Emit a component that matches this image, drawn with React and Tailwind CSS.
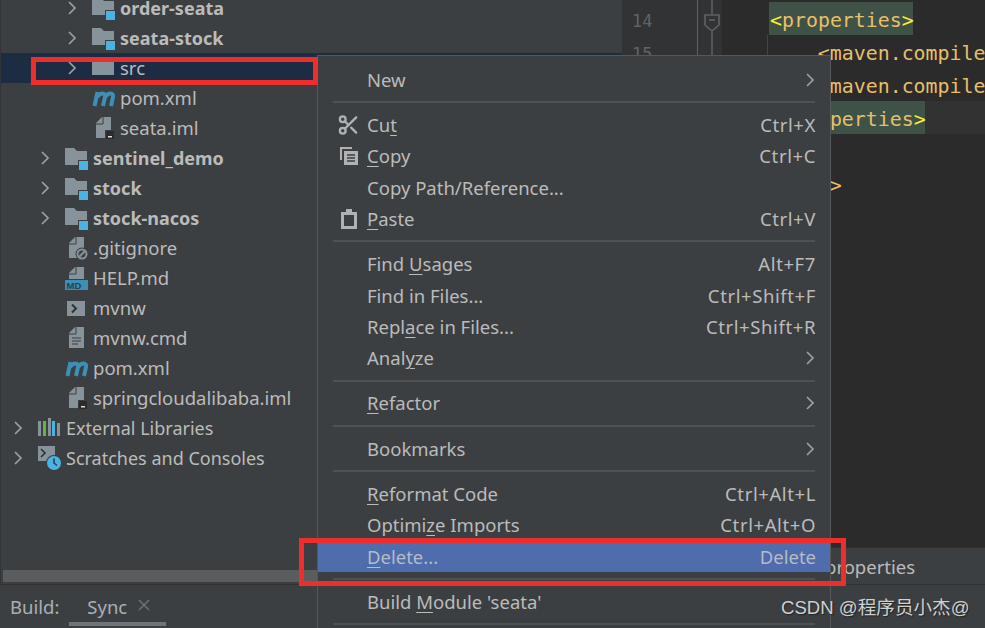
import { Scissors } from 'lucide-react';

const Chevron = ({ className = 'w-[12px] h-[16px]' }) => (
  <svg viewBox="0 0 12 16" className={className} fill="none" stroke="#9da0a2" strokeWidth="1.7">
    <path d="M3 2l6 6-6 6" />
  </svg>
);

// file tree icons
const FolderIcon = ({ badge }) => (
  <svg width="23" height="24" viewBox="0 0 23 24">
    <path d="M0 2h9l3 3h10v14H0z" fill="#87939a" />
    {badge && <rect x="13" y="14" width="10" height="10" fill="#3c3f41" />}
    {badge && <rect x="14" y="15" width="9" height="9" fill="#4cb2e2" />}
  </svg>
);

const FileBody = () => (
  <>
    <path d="M4 7l6-6h9v21H4z" fill="#87939a" />
    <path d="M4 8h7V1" fill="none" stroke="#3c3f41" strokeWidth="1" />
  </>
);

const ImlIcon = () => (
  <svg width="23" height="24" viewBox="0 0 23 24">
    <FileBody />
    <rect x="13.5" y="14.5" width="9" height="9" fill="#2b2b2b" stroke="#3c3f41" />
    <rect x="16" y="20" width="4" height="1.5" fill="#dddddd" />
  </svg>
);

const GitIgnoreIcon = () => (
  <svg width="23" height="24" viewBox="0 0 23 24">
    <FileBody />
    <circle cx="17" cy="18" r="6.5" fill="#3c3f41" />
    <circle cx="17" cy="18" r="4.5" fill="none" stroke="#87939a" strokeWidth="2" />
    <path d="M14 21l6-6" stroke="#87939a" strokeWidth="2" />
  </svg>
);

const MdIcon = () => (
  <svg width="23" height="24" viewBox="0 0 23 24">
    <path d="M4 7l6-6h9v12H4z" fill="#87939a" />
    <path d="M4 8h7V1" fill="none" stroke="#3c3f41" strokeWidth="1" />
    <rect x="0" y="14" width="23" height="10" fill="#3d8fb5" />
    <text x="1.5" y="22.5" fontSize="9.5" fontWeight="700" fill="#2b3f4c" fontFamily="Liberation Sans, sans-serif">MD</text>
  </svg>
);

const ShellIcon = () => (
  <svg width="23" height="24" viewBox="0 0 23 24">
    <rect x="2" y="5" width="18" height="15" fill="#87939a" />
    <path d="M7 8.5l4 4-4 4" fill="none" stroke="#2f3234" strokeWidth="2" />
  </svg>
);

const TextIcon = () => (
  <svg width="23" height="24" viewBox="0 0 23 24">
    <FileBody />
    <path d="M7 12h9M7 15h9M7 18h6" stroke="#3c3f41" strokeWidth="1.2" />
  </svg>
);

const MavenIcon = () => (
  <svg width="23" height="24" viewBox="0 0 23 24" fill="none" stroke="#3d8fb5" strokeWidth="4">
    <path d="M2.5 20L5.5 6" />
    <path d="M5 11Q7.5 7.5 10.5 7.5Q13.5 7.5 13 11L11 20" />
    <path d="M13 11Q15.5 7.5 18.5 7.5Q21.5 7.5 21 11L19 20" />
  </svg>
);

const LibIcon = () => (
  <svg width="23" height="24" viewBox="0 0 23 24">
    <rect x="0" y="5" width="3" height="15" fill="#87939a" />
    <rect x="5" y="5" width="3" height="15" fill="#62b543" />
    <rect x="10" y="2" width="3" height="18" fill="#87939a" />
    <rect x="14" y="5" width="3" height="15" fill="#4cb2e2" />
    <rect x="19" y="7" width="3" height="13" fill="#87939a" />
  </svg>
);

const ScratchIcon = () => (
  <svg width="23" height="24" viewBox="0 0 23 24">
    <rect x="0" y="0" width="17" height="15" fill="#87939a" />
    <path d="M3 3l4 4-4 4" fill="none" stroke="#2f3234" strokeWidth="1.6" />
    <circle cx="16" cy="17" r="8" fill="#3c3f41" />
    <circle cx="16" cy="17" r="7" fill="#4cb2e2" />
    <path d="M16 12.5V17l3 2.5" fill="none" stroke="#2b3f4c" strokeWidth="1.6" />
  </svg>
);

const depthPad = ['pl-[8px]', 'pl-[35px]', 'pl-[62px]'];

const tree = [
  { depth: 2, arrow: true, icon: <FolderIcon badge />, name: 'order-seata', bold: true },
  { depth: 2, arrow: true, icon: <FolderIcon badge />, name: 'seata-stock', bold: true },
  { depth: 2, arrow: true, icon: <FolderIcon />, name: 'src', selected: true },
  { depth: 2, icon: <MavenIcon />, name: 'pom.xml' },
  { depth: 2, icon: <ImlIcon />, name: 'seata.iml' },
  { depth: 1, arrow: true, icon: <FolderIcon badge />, name: 'sentinel_demo', bold: true },
  { depth: 1, arrow: true, icon: <FolderIcon badge />, name: 'stock', bold: true },
  { depth: 1, arrow: true, icon: <FolderIcon badge />, name: 'stock-nacos', bold: true },
  { depth: 1, icon: <GitIgnoreIcon />, name: '.gitignore' },
  { depth: 1, icon: <MdIcon />, name: 'HELP.md' },
  { depth: 1, icon: <ShellIcon />, name: 'mvnw' },
  { depth: 1, icon: <TextIcon />, name: 'mvnw.cmd' },
  { depth: 1, icon: <MavenIcon />, name: 'pom.xml' },
  { depth: 1, icon: <ImlIcon />, name: 'springcloudalibaba.iml' },
  { depth: 0, arrow: true, icon: <LibIcon />, name: 'External Libraries', small: true },
  { depth: 0, arrow: true, icon: <ScratchIcon />, name: 'Scratches and Consoles', small: true },
];

const CopyIcon = () => (
  <svg width="20" height="20" viewBox="0 0 20 20">
    <path d="M1 1h12v2H3v11H1z" fill="#afb1b3" />
    <path d="M5 5h14v14H5z" fill="#afb1b3" />
    <path d="M8 9h8M8 12h8M8 15h8" stroke="#3c3f41" strokeWidth="1.4" />
  </svg>
);

const PasteIcon = () => (
  <svg width="20" height="20" viewBox="0 0 20 20">
    <path d="M2 3h5V0h6v3h5v17H2z" fill="#afb1b3" />
    <rect x="5" y="6" width="10" height="11" fill="#3c3f41" />
  </svg>
);

const U = ({ children }) => <span className="underline underline-offset-[3px] decoration-1">{children}</span>;

const menu = [
  { label: 'New', sub: true },
  'sep',
  { label: <>Cu<U>t</U></>, key: 'Ctrl+X', icon: <Scissors size={24} color="#afb1b3" strokeWidth={2.4} /> },
  { label: <><U>C</U>opy</>, key: 'Ctrl+C', icon: <CopyIcon /> },
  { label: 'Copy Path/Reference...' },
  { label: <><U>P</U>aste</>, key: 'Ctrl+V', icon: <PasteIcon /> },
  'sep',
  { label: <>Find <U>U</U>sages</>, key: 'Alt+F7' },
  { label: 'Find in Files...', key: 'Ctrl+Shift+F' },
  { label: <>Repl<U>a</U>ce in Files...</>, key: 'Ctrl+Shift+R' },
  { label: <>Anal<U>y</U>ze</>, sub: true },
  'sep',
  { label: <><U>R</U>efactor</>, sub: true },
  'sep',
  { label: 'Bookmarks', sub: true },
  'sep',
  { label: <><U>R</U>eformat Code</>, key: 'Ctrl+Alt+L' },
  { label: <>Optimi<U>z</U>e Imports</>, key: 'Ctrl+Alt+O' },
  { label: <><U>D</U>elete...</>, key: 'Delete', active: true },
  'sep',
  { label: <>Build <U>M</U>odule 'seata'</> },
  'sep',
];

const code = [
  { tag: ['<', 'properties', '>'], mark: 'w-[144px] ml-[47px]' },
  { text: '        <maven.compiler.source>8</maven.compiler.source>' },
  { text: '        <maven.compiler.target>8</maven.compiler.target>' },
  { current: true, tag: ['</', 'properties', '>'], mark: 'w-[156px] ml-[47px]' },
  { text: '' },
  { text: '</project>' },
];

export default function App() {
  return (
    <div className="relative w-[985px] h-[628px] overflow-hidden flex flex-col bg-[#3c3f41] text-[#bbbbbb] font-['Noto_Sans',sans-serif] text-[18.5px]">
      <div className="flex h-[585px] border-b border-[#323232]">
        {/* Project tree */}
        <div className="w-[622px] flex flex-col border-l border-[#323537]">
          <div className="flex-1 overflow-hidden">
            <div className="-mt-[7px]">
              {tree.map((row, i) => (
                <div
                  key={i}
                  className={`h-[30px] flex items-center ${depthPad[row.depth]} ${row.selected ? 'bg-[#1b2c43]' : ''}`}
                >
                  <span className="w-[18px] mr-[11px] flex justify-center">{row.arrow && <Chevron />}</span>
                  <span className="w-[23px] h-[24px] mr-[5px]">{row.icon}</span>
                  <span className={`whitespace-nowrap ${row.bold ? 'font-bold text-[18px]' : ''} ${row.small ? 'text-[18px]' : ''}`}>
                    {row.name}
                  </span>
                </div>
              ))}
            </div>
          </div>
          <div className="h-[12px] mb-[2px] ml-[2px] bg-[#5a5c5e]" />
        </div>

        {/* Editor */}
        <div className="flex-1 flex flex-col min-w-0">
          <div className="flex-1 flex min-h-0 bg-[#2b2b2b]">
            <div className="w-[76px] shrink-0 bg-[#313335] border-r border-[#4f6a62] pl-[10px] pt-[5px] font-['DejaVu_Sans_Mono',monospace] text-[17px] leading-[33px] text-[#606366]">
              <div>14</div>
              <div>15</div>
            </div>
            <div className="w-[24px] shrink-0 bg-[#313335] pl-[6px]">
              <div className="w-[16px] h-full flex flex-col items-center">
                <div className="w-[2px] h-[14px] bg-[#555555]" />
                <svg width="16" height="18" viewBox="0 0 16 18" fill="none" stroke="#606366" strokeWidth="1.6" className="shrink-0">
                  <path d="M1 1h14v10l-7 6-7-6z" />
                  <path d="M5 6h6" />
                </svg>
                <div className="w-[2px] flex-1 bg-[#555555]" />
              </div>
            </div>
            <div className="flex-1 min-w-0 overflow-hidden pt-[2px] font-['DejaVu_Sans_Mono',monospace] text-[19.9px] leading-[37px] text-[#e8bf6a]">
              {code.map((line, i) => (
                <div key={i} className={`h-[33px] whitespace-pre ${line.current ? 'bg-[#323232]' : ''}`}>
                  {line.tag ? (
                    <div className={`h-[33px] bg-[#3e5248] pl-[1px] ${line.mark}`}>
                      <span className="text-[#ffef28]">{line.tag[0]}</span>
                      {line.tag[1]}
                      <span className="text-[#ffef28]">{line.tag[2]}</span>
                    </div>
                  ) : (
                    line.text
                  )}
                </div>
              ))}
            </div>
          </div>
          <div className="h-[37px] shrink-0 bg-[#3c3f41] border-t border-[#323232] pl-[203px] pt-[2px] flex items-center">
            properties
          </div>
        </div>
      </div>

      {/* indent guide */}
      <div className="absolute left-[767px] top-[35px] w-px h-[20px] bg-[#444444]" />

      {/* Tool window bar */}
      <div className="h-[42px] flex pl-[10px] pt-[8px] text-[#a9b0b5]">
        <span>Build:</span>
        <div className="relative ml-[28px] w-[80px]">
          Sync
          <span className="absolute left-[50px] top-[5px]">
            <svg width="14" height="14" viewBox="0 0 14 14" stroke="#6e7072" strokeWidth="1.5">
              <path d="M2 2l10 10M12 2L2 12" />
            </svg>
          </span>
        </div>
        <div className="absolute left-[69px] top-[622px] w-[97px] h-[4px] bg-[#6f737a]" />
      </div>

      {/* Context menu */}
      <div className="absolute left-[317px] top-[55px] w-[514px] h-[580px] bg-[#3c3f41] border border-[#555759] pt-[8px]">
        {menu.map((item, i) =>
          item === 'sep' ? (
            <div key={i} className="h-[14px] pl-[15px] pr-[15px] flex items-center">
              <div className="h-[2px] w-full bg-[#515151]" />
            </div>
          ) : (
            <div
              key={i}
              className={`h-[31.3px] flex items-center pl-[49px] pr-[14px] ${item.active ? 'bg-[#4f6cac] text-[#b4bcc8]' : ''}`}
            >
              {item.icon && (
                <span className="absolute left-[19px] w-[23px] flex justify-center">{item.icon}</span>
              )}
              <span className="flex-1 whitespace-nowrap">{item.label}</span>
              {item.key && (
                <span className={`whitespace-nowrap ${item.active ? '' : 'tracking-[0.6px]'}`}>{item.key}</span>
              )}
              {item.sub && <Chevron />}
            </div>
          ),
        )}
      </div>

      {/* Red annotation boxes */}
      <div className="absolute left-[31px] top-[57px] w-[287px] h-[28px] border-[5px] border-[#ee2d2d]" />
      <div className="absolute left-[299px] top-[538px] w-[547px] h-[48px] border-[5px] border-[#ee2d2d]" />

      {/* Watermark */}
      <div className="absolute left-[781px] top-[596px] whitespace-nowrap font-['Liberation_Sans','Noto_Sans_CJK_SC',sans-serif] text-[18.6px] leading-[24px] text-[#d0d0d0] [text-shadow:1px_1px_1px_#222222]">
        CSDN @程序员小杰@
      </div>
    </div>
  );
}
